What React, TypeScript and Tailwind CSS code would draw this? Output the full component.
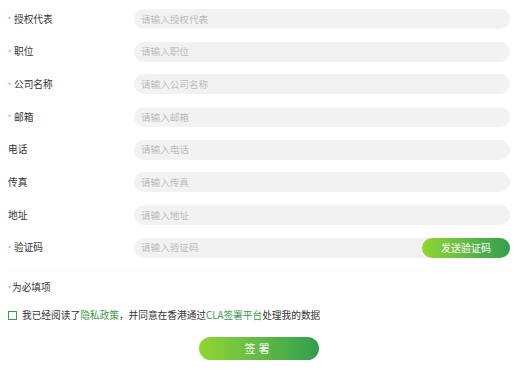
import React from "react";

const fields: { label: string; required: boolean }[] = [
  { label: "授权代表", required: true },
  { label: "职位", required: true },
  { label: "公司名称", required: true },
  { label: "邮箱", required: true },
  { label: "电话", required: false },
  { label: "传真", required: false },
  { label: "地址", required: false },
];

const font = { fontFamily: '"Noto Sans CJK SC", "Noto Sans", sans-serif' };

function Label({ text, required }: { text: string; required: boolean }) {
  return (
    <div className="w-[126px] shrink-0 flex items-center text-[9.7px] text-[#333]">
      {required ? (
        <span className="text-[#f56c6c] text-[7px] w-[6px] leading-none translate-y-[1px]">*</span>
      ) : null}
      <span>{text}</span>
    </div>
  );
}

export default function App() {
  return (
    <div className="w-[517px] h-[374px] bg-white pl-[8px] pr-[7px] pt-[9px]" style={font}>
      <div className="flex flex-col gap-[12.67px]">
        {fields.map((f) => (
          <div key={f.label} className="flex items-center h-[20px]">
            <Label text={f.label} required={f.required} />
            <div className="flex-1 h-[20px] rounded-full bg-[#f2f2f2] flex items-center pl-[7px] text-[9.6px] text-[#bbbbbb]">
              请输入{f.label}
            </div>
          </div>
        ))}
        <div className="flex items-center h-[20px]">
          <Label text="验证码" required={true} />
          <div className="flex-1 h-[20px] rounded-full bg-[#f2f2f2] flex items-center justify-between pl-[7px] text-[9.6px] text-[#bbbbbb]">
            <span>请输入验证码</span>
            <div className="w-[88px] h-[20px] rounded-full bg-gradient-to-r from-[#8fd631] to-[#2f9e4d] flex items-center justify-center text-white text-[10px]">
              发送验证码
            </div>
          </div>
        </div>
      </div>
      <div className="mt-[12.5px] border-t border-dotted border-[#f0f0f0] mr-[-1px]" />
      <div className="mt-[9px] flex items-center text-[9.7px] text-[#333] h-[14px]">
        <span className="text-[#f56c6c] text-[7px] w-[4px] leading-none translate-y-[1px]">*</span>
        <span>为必填项</span>
      </div>
      <div className="mt-[14px] flex items-center h-[14px] text-[9.7px] text-[#333]">
        <div className="w-[9px] h-[9px] border border-[#3a9a4a] mr-[5px] shrink-0" />
        <span>
          我已经阅读了<span className="text-[#3a9a4a]">隐私政策</span>，并同意在香港通过
          <span className="text-[#3a9a4a]">CLA签署平台</span>处理我的数据
        </span>
      </div>
      <div className="mt-[15px] flex justify-center pr-[1px]">
        <div className="w-[120px] h-[23px] rounded-full bg-gradient-to-r from-[#8fd631] to-[#2f9e4d] flex items-center justify-center text-white text-[11px] tracking-[3px]">
          签署
        </div>
      </div>
    </div>
  );
}
